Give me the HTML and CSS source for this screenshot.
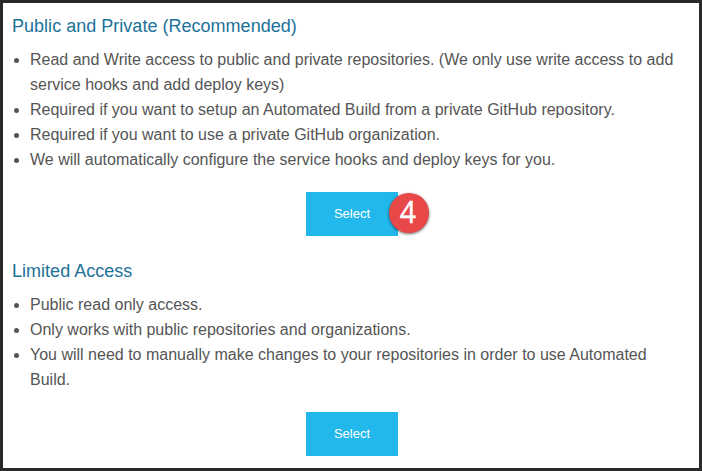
FILE: index.html
```html
<!DOCTYPE html>
<html lang="en">
<head>
<meta charset="utf-8">
<title>GitHub access</title>
<link rel="stylesheet" href="styles.css">
</head>
<body>
<main class="panel">
  <section class="option">
    <h2>Public and Private (Recommended)</h2>
    <ul>
      <li>Read and Write access to public and private repositories. (We only use write access to add service hooks and add deploy keys)</li>
      <li>Required if you want to setup an Automated Build from a private GitHub repository.</li>
      <li>Required if you want to use a private GitHub organization.</li>
      <li>We will automatically configure the service hooks and deploy keys for you.</li>
    </ul>
    <div class="action"><button type="button">Select</button><span class="badge"><span class="digit">4</span></span></div>
  </section>
  <section class="option">
    <h2>Limited Access</h2>
    <ul>
      <li>Public read only access.</li>
      <li>Only works with public repositories and organizations.</li>
      <li>You will need to manually make changes to your repositories in order to use Automated Build.</li>
    </ul>
    <div class="action"><button type="button">Select</button></div>
  </section>
</main>
</body>
</html>
```
FILE: styles.css
```css
* { box-sizing: border-box; }
body { margin: 0; font-family: "Liberation Sans", Arial, sans-serif; color: #555; }
.panel { width: 702px; height: 471px; border: 3px solid #2a2829; background: #fff; padding: 11px 9px 0; overflow: hidden; }
.option { margin-bottom: 23px; }
h2 { margin: 0 0 8px; font-size: 18px; line-height: 25px; font-weight: 400; color: #1c7299; letter-spacing: 0.02px; }
ul { margin: 0; padding: 0 8px 0 18px; font-size: 16px; line-height: 25px; }
.action { position: relative; width: 92px; height: 44px; margin: 20px 0 0 294px; }
button { display: block; width: 92px; height: 44px; padding: 0; border: 0; background: #22b8eb; color: #fff; font: 13px/44px "Liberation Sans", Arial, sans-serif; }
.badge { position: absolute; left: 83px; top: 1px; width: 40px; height: 40px; border-radius: 50%; background: #e84848; color: #fff; font: 30px/38px "Noto Sans", "Open Sans", sans-serif; text-align: center; box-shadow: 0 1px 3px rgba(0,0,0,.6); }
.digit { display: block; margin-left: -2px; transform: scaleX(.95); -webkit-text-stroke: 0.3px #fff; }
```
